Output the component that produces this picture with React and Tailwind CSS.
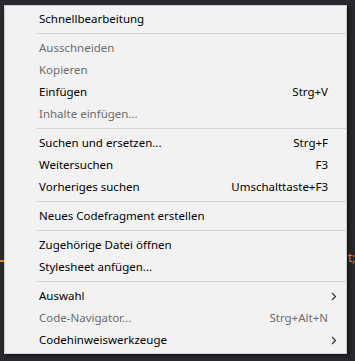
import React from "react";

const items = [
  { label: "Schnellbearbeitung" },
  { sep: true },
  { label: "Ausschneiden", disabled: true },
  { label: "Kopieren", disabled: true },
  { label: "Einfügen", shortcut: "Strg+V" },
  { label: "Inhalte einfügen...", disabled: true },
  { sep: true },
  { label: "Suchen und ersetzen...", shortcut: "Strg+F" },
  { label: "Weitersuchen", shortcut: "F3" },
  { label: "Vorheriges suchen", shortcut: "Umschalttaste+F3" },
  { sep: true },
  { label: "Neues Codefragment erstellen" },
  { sep: true },
  { label: "Zugehörige Datei öffnen" },
  { label: "Stylesheet anfügen..." },
  { sep: true },
  { label: "Auswahl", submenu: true },
  { label: "Code-Navigator...", shortcut: "Strg+Alt+N", disabled: true },
  { label: "Codehinweiswerkzeuge", submenu: true },
];

const Chevron = () => (
  <svg width="6" height="9" viewBox="0 0 6 9" className="text-[#333]">
    <path d="M1 1 L4.5 4.5 L1 8" fill="none" stroke="currentColor" strokeWidth="1.2" />
  </svg>
);

export default function App() {
  return (
    <div
      className="w-[355px] h-[361px] bg-[#28292c] pl-[4px] pt-[5px] overflow-hidden relative"
      style={{ fontFamily: '"Segoe UI", "Noto Sans", sans-serif' }}
    >
      {/* bits of code behind the menu */}
      <div className="absolute left-0 top-[260px] w-[4px] h-[2px] bg-[#d78a2a]" />
      <div className="absolute left-[348px] top-[252px] text-[12px] leading-none text-[#c78a3a]">t;</div>

      <div className="w-[343px] h-[349px] bg-[#f2f2f2] border border-[#cfcfcf] shadow-[2px_2px_3px_rgba(0,0,0,0.5)] py-[2px] text-[11.5px]">
        {items.map((it, i) =>
          it.sep ? (
            <div key={i} className="h-[7px] flex items-center pl-[31px]">
              <div className="h-px w-full bg-[#d7d7d7]" />
            </div>
          ) : (
            <div
              key={i}
              className={`h-[22px] flex items-center pl-[34px] pr-[18px] ${
                it.disabled ? "text-[#6d6d6d]" : "text-black"
              }`}
            >
              <span className="flex-1">{it.label}</span>
              {it.shortcut && <span>{it.shortcut}</span>}
              {it.submenu && (
                <span className="mr-[-9px]">
                  <Chevron />
                </span>
              )}
            </div>
          )
        )}
      </div>
    </div>
  );
}
